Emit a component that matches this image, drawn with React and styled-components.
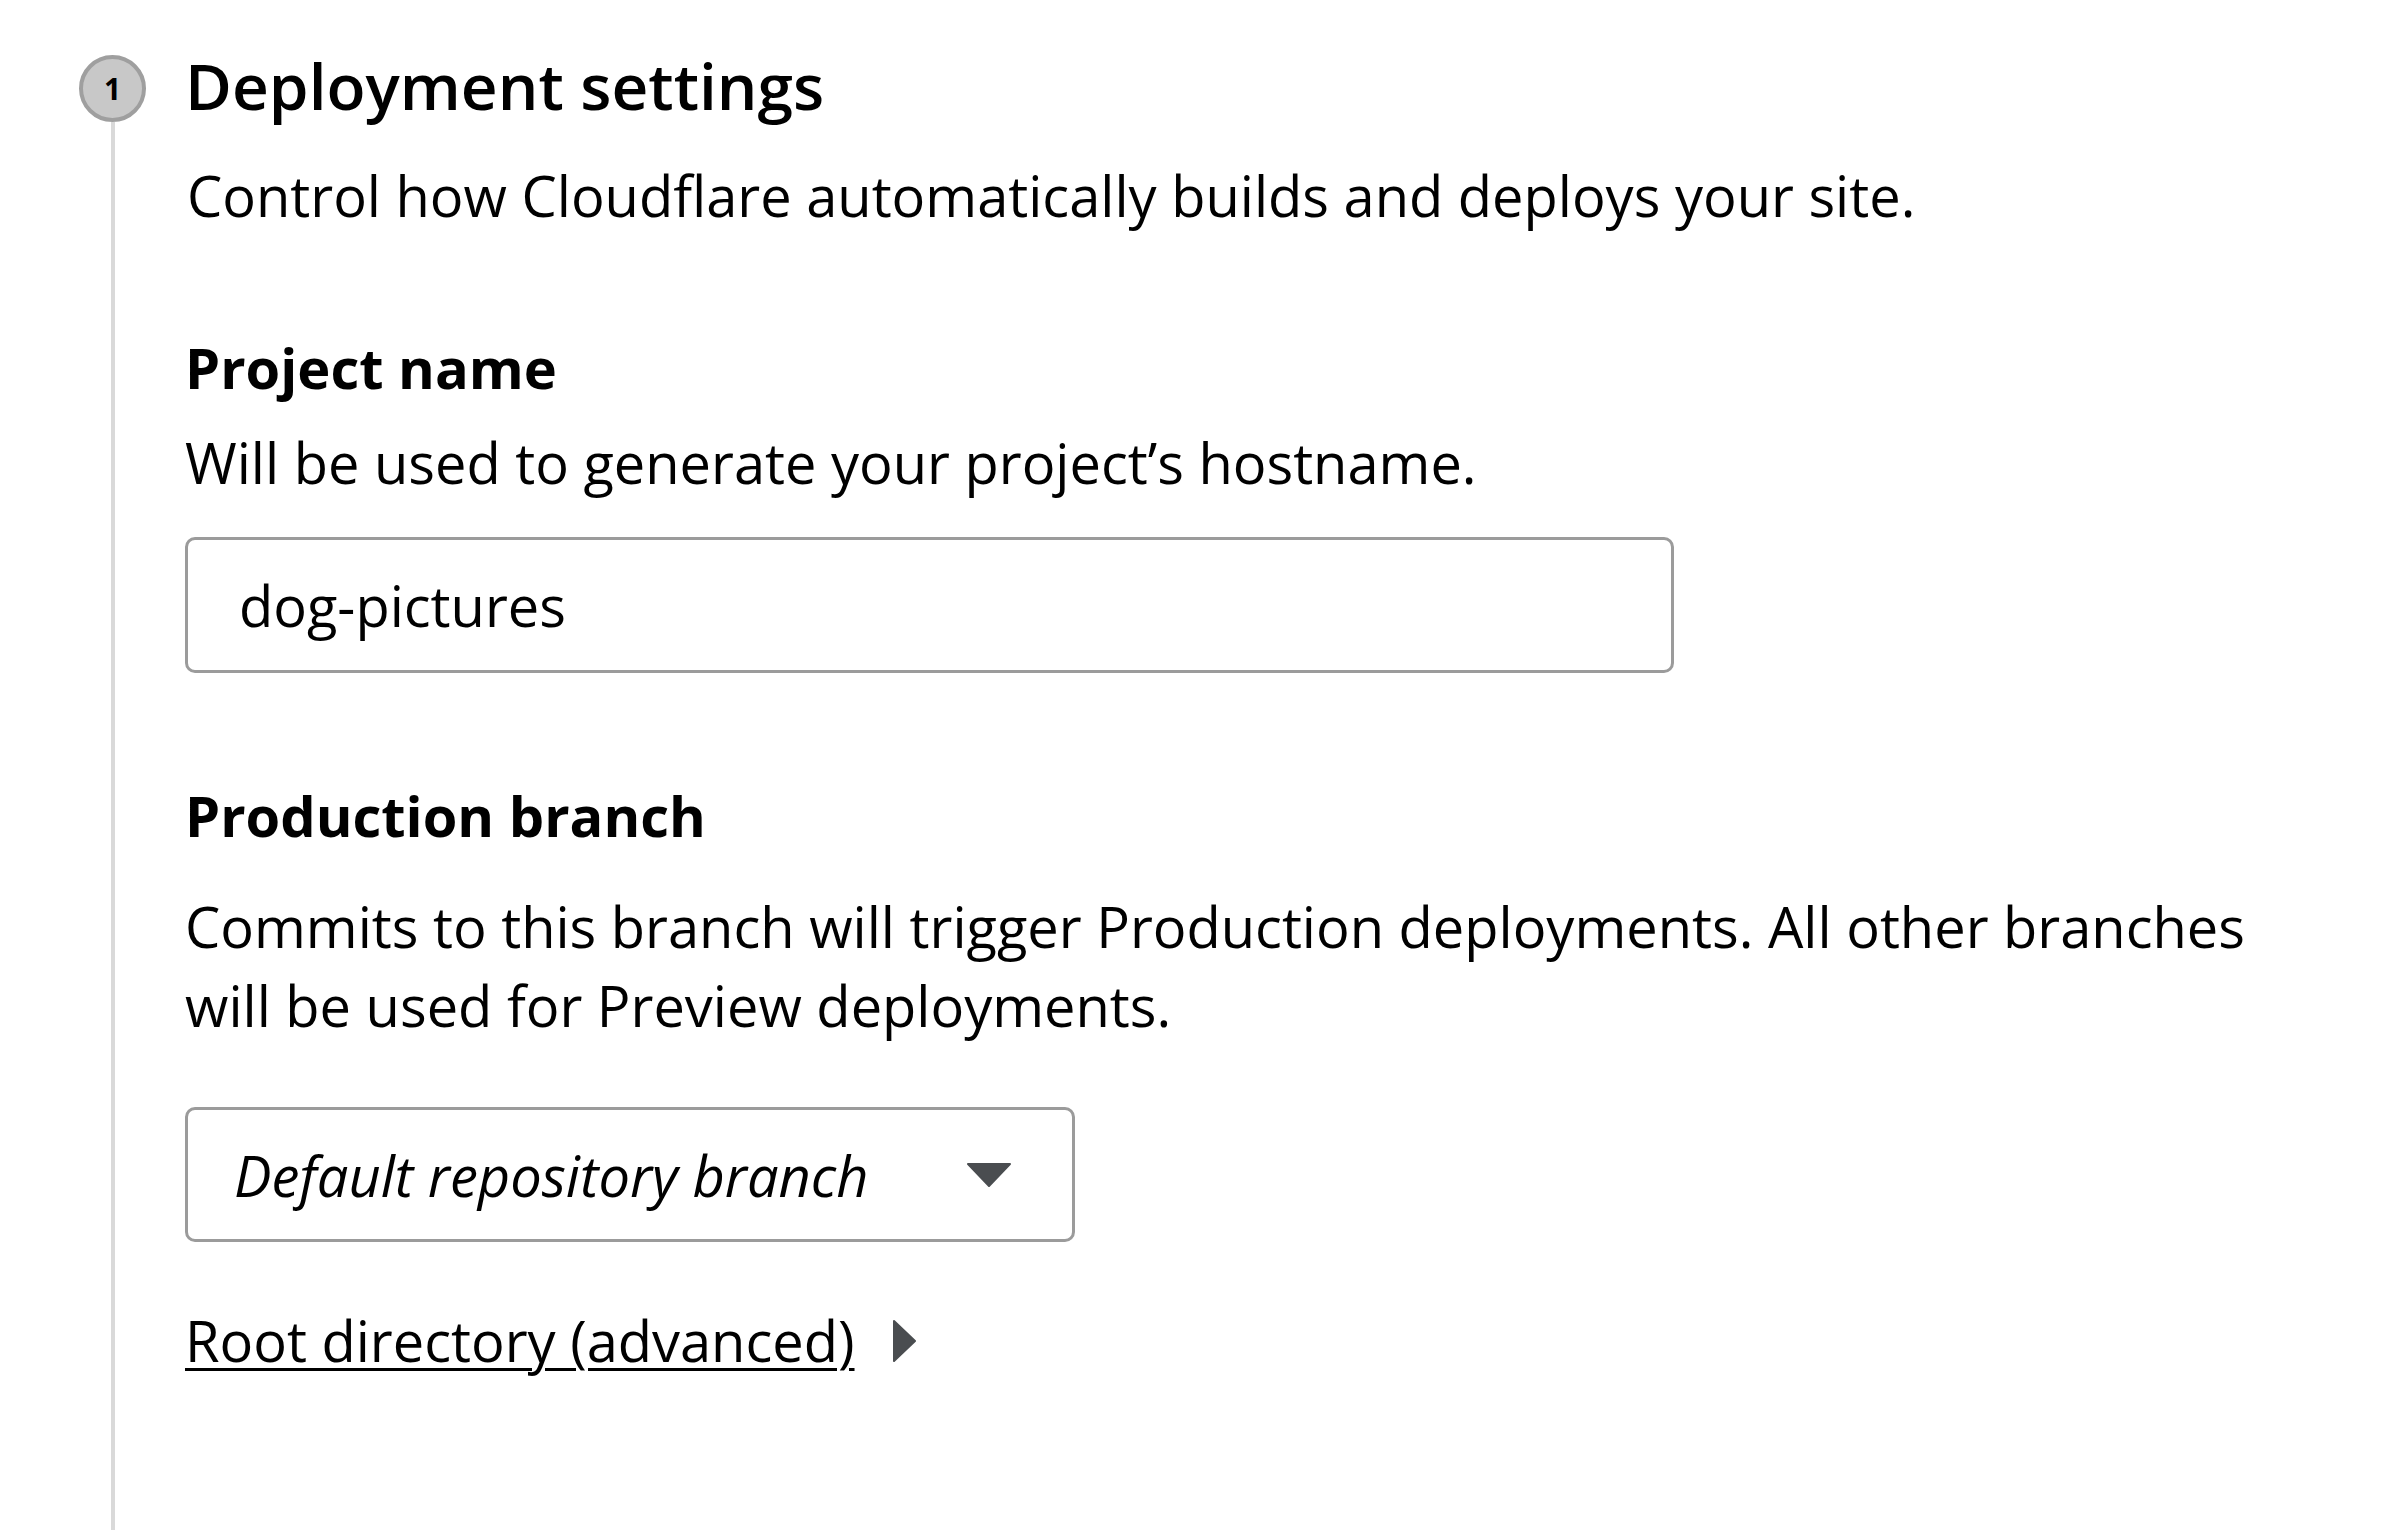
import styled, { createGlobalStyle } from 'styled-components';

const GlobalStyle = createGlobalStyle`
    html, body {
        margin: 0;
        background: #fff;
        font-family: 'Open Sans', 'Noto Sans', sans-serif;
        color: #000;
    }
`;

const Page = styled.main`
    display: grid;
    grid-template-columns: 67px 1fr;
    column-gap: 38px;
    min-height: 100vh;
    box-sizing: border-box;
    padding: 41px 80px 0 79px;
`;

const Rail = styled.div`
    display: flex;
    flex-direction: column;
    align-items: center;
`;

const StepCircle = styled.div`
    width: 67px;
    height: 67px;
    margin-top: 14px;
    box-sizing: border-box;
    border-radius: 50%;
    border: 4px solid #9f9f9f;
    background: #c8c8c8;
    display: flex;
    align-items: center;
    justify-content: center;
    font-size: 30px;
    font-weight: 700;
`;

const RailLine = styled.div`
    flex: 1;
    width: 4px;
    background: #d9d9d9;
`;

const Content = styled.section`
    display: flex;
    flex-direction: column;
    align-items: flex-start;
    padding-left: 1px;
`;

const Title = styled.h1`
    margin: 0;
    font-size: 64px;
    font-weight: 600;
    line-height: 90px;
`;

const Subtitle = styled.p`
    margin: 25px 0 0 2px;
    font-size: 56px;
    line-height: 79px;
`;

const Field = styled.div`
    margin-top: ${p => p.$top}px;
    display: flex;
    flex-direction: column;
    align-items: flex-start;
`;

const Label = styled.label`
    font-size: 56px;
    font-weight: 700;
    line-height: 78px;
`;

const Hint = styled.p`
    margin: ${p => p.$gap}px 0 0;
    font-size: 56px;
    line-height: 79px;
`;

const TextInput = styled.input`
    margin-top: 35px;
    width: 1489px;
    height: 136px;
    box-sizing: border-box;
    border: 3px solid #9b9b9b;
    border-radius: 10px;
    padding: 0 51px;
    font: inherit;
    font-size: 56px;
    color: #000;
    outline: none;
`;

const Select = styled.div`
    margin-top: 62px;
    width: 890px;
    height: 135px;
    box-sizing: border-box;
    border: 3px solid #9b9b9b;
    border-radius: 10px;
    padding: 0 61px 0 46px;
    display: flex;
    align-items: center;
    justify-content: space-between;
    font-size: 56px;
    font-style: italic;
`;

const Disclosure = styled.a`
    margin-top: 59px;
    display: flex;
    align-items: center;
    gap: 38px;
    font-size: 56px;
    line-height: 79px;
    color: #000;
    cursor: pointer;
`;

const LinkText = styled.span`
    text-decoration: underline;
    text-decoration-thickness: 3px;
    text-underline-offset: 6px;
`;

function Caret({ dir }) {
    if (dir === 'down') {
        return (
            <svg width="44" height="24" viewBox="0 0 44 24">
                <path d="M1 1 H43 L22 23 Z" fill="#4a4d50" stroke="#4a4d50" strokeWidth="2" strokeLinejoin="round" />
            </svg>
        );
    }
    return (
        <svg width="23" height="42" viewBox="0 0 23 42">
            <path d="M1 1 L22 21 L1 41 Z" fill="#4a4d50" stroke="#4a4d50" strokeWidth="2" strokeLinejoin="round" />
        </svg>
    );
}

export default function App() {
    return (
        <>
            <GlobalStyle />
            <Page>
                <Rail>
                    <StepCircle>1</StepCircle>
                    <RailLine />
                </Rail>
                <Content>
                    <Title>Deployment settings</Title>
                    <Subtitle>Control how Cloudflare automatically builds and deploys your site.</Subtitle>

                    <Field $top={93}>
                        <Label>Project name</Label>
                        <Hint $gap={17}>Will be used to generate your project’s hostname.</Hint>
                        <TextInput readOnly value="dog-pictures" />
                    </Field>

                    <Field $top={103}>
                        <Label>Production branch</Label>
                        <Hint $gap={33}>
                            Commits to this branch will trigger Production deployments. All other branches will be used for Preview deployments.
                        </Hint>
                        <Select>
                            <span>Default repository branch</span>
                            <Caret dir="down" />
                        </Select>
                    </Field>

                    <Disclosure>
                        <LinkText>Root directory (advanced)</LinkText>
                        <Caret dir="right" />
                    </Disclosure>
                </Content>
            </Page>
        </>
    );
}
